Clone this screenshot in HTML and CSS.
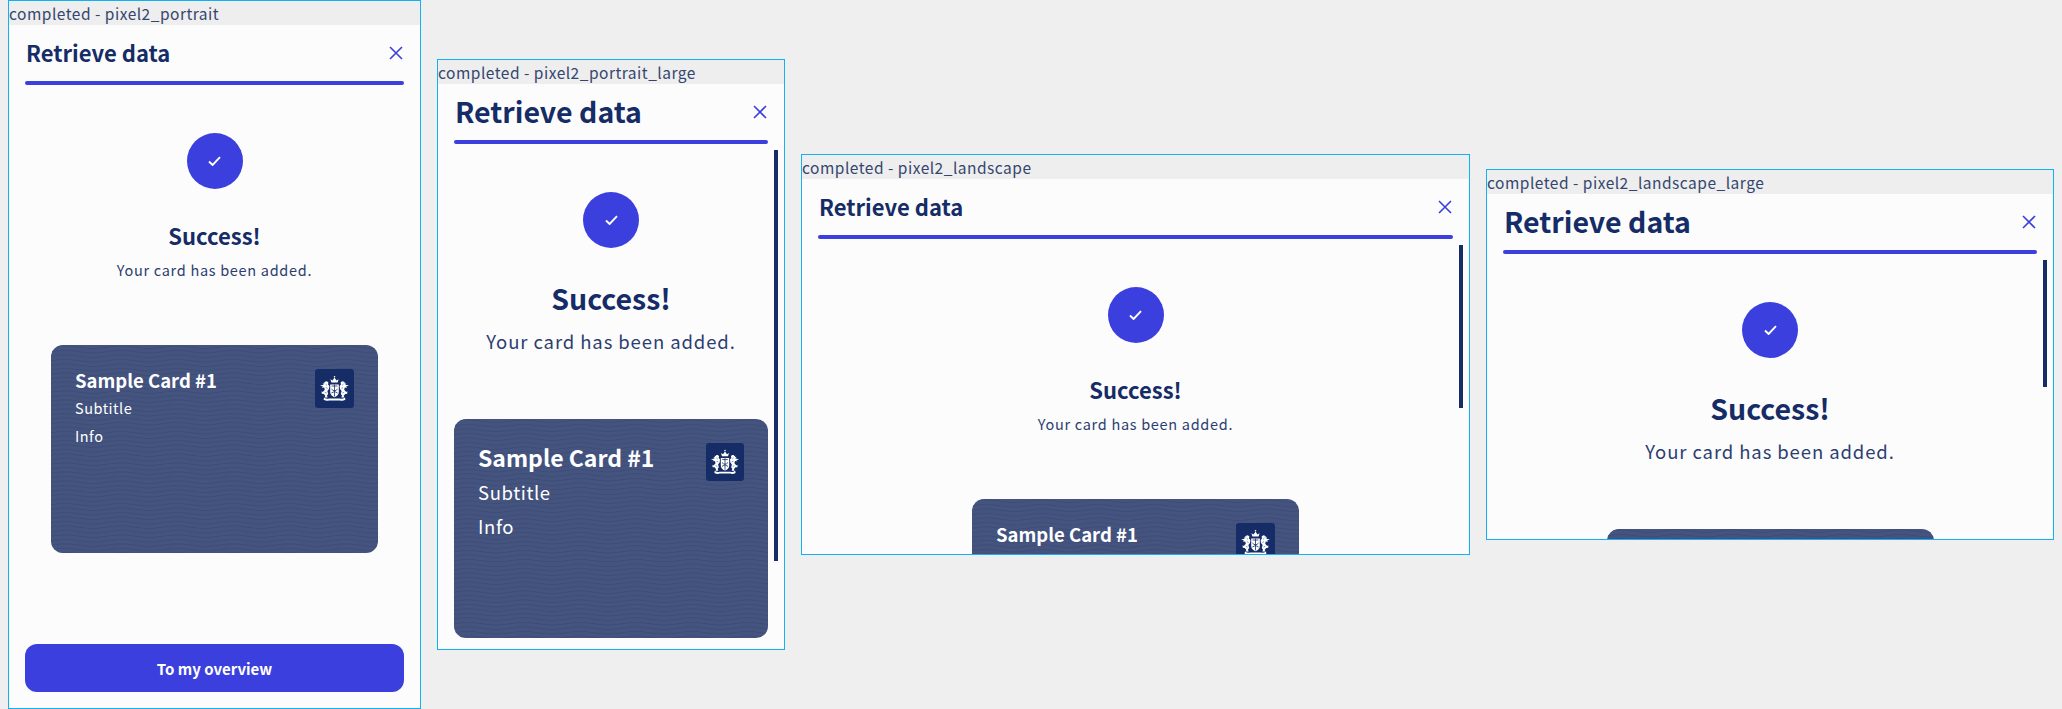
FILE: index.html
```html
<!DOCTYPE html>
<html lang="en">
<head>
<meta charset="utf-8">
<title>Retrieve data</title>
<link rel="stylesheet" href="styles.css">
</head>
<body>
<svg class="defs" width="0" height="0" aria-hidden="true">
  <defs>
    <pattern id="waves" width="56" height="9" patternUnits="userSpaceOnUse">
      <path d="M0 2.2 C14 0.4 14 0.4 28 2.2 S42 4 56 2.2" fill="none" stroke="#3a4a75" stroke-width="0.8"/>
      <path d="M0 6.7 C14 4.9 14 4.9 28 6.7 S42 8.5 56 6.7" fill="none" stroke="#3a4a75" stroke-width="0.8"/>
    </pattern>
    <g id="lion">
      <path d="M14.4 17 L13 15.4 L13.4 13.6 L12.2 12.4 L10.6 12.2 L10 13.4 L8.8 13 L9.4 14.6 L7.6 14.4 L8.8 15.8 L5 16.6 L8 17.6 L6.8 18.8 L9.2 18.6 L9.8 20.8 L7.8 23 L6.6 22.2 L6.8 24.8 L8.8 25 L10.4 27 L9.6 28.6 L12.6 28.6 L12 26.4 L13.2 25 L12.4 22 L14 20 Z" fill="#fff"/>
      <path d="M10.6 15.2 L12 16.4 M10.8 18.6 L12.6 19.4 M9.8 23.4 L11.6 24" stroke="#152c66" stroke-width="0.5" fill="none"/>
    </g>
    <g id="coat">
      <use href="#lion"/>
      <use href="#lion" transform="matrix(-1 0 0 1 39 0)"/>
      <path d="M16.4 13.6 L15.4 10.2 L17.5 11.6 L19.5 8.6 L21.5 11.6 L23.6 10.2 L22.6 13.6 Z" fill="#fff"/>
      <circle cx="19.5" cy="7.8" r="0.8" fill="#fff"/>
      <path d="M15.2 15.4 H23.8 V23 Q23.8 26.6 19.5 28.2 Q15.2 26.6 15.2 23 Z" fill="#fff"/>
      <path d="M16.6 17 H22.4 M19.5 15.6 V27.4 M16.4 20 Q19.5 23.6 22.6 20 M16.4 24 Q19.5 21 22.6 24" stroke="#152c66" stroke-width="0.8" fill="none"/>
      <path d="M9 28.6 Q12 30.6 14 29.4 H25 Q27 30.6 30 28.6 L30.4 30.8 Q27.4 32.4 25 31.4 H14 Q11.6 32.4 8.6 30.8 Z" fill="#fff"/>
    </g>
    <g id="close-x">
      <path d="M1 1 L13 13 M13 1 L1 13" fill="none" stroke="#3a3fdd" stroke-width="1.6"/>
    </g>
    <g id="tick">
      <path d="M1 5.5 L4.6 9 L12 1.2" fill="none" stroke="#fff" stroke-width="1.9"/>
    </g>
  </defs>
</svg>

<section class="frame frame-portrait">
  <div class="frame-label">completed - pixel2_portrait</div>
  <div class="modal">
    <header class="modal-head">
      <h1 class="modal-title">Retrieve data</h1>
      <svg class="close" width="14" height="14" viewBox="0 0 14 14"><use href="#close-x"/></svg>
    </header>
    <div class="modal-rule"></div>
    <div class="modal-body">
      <div class="badge"><svg width="13" height="10" viewBox="0 0 13 10"><use href="#tick"/></svg></div>
      <h2 class="headline">Success!</h2>
      <p class="message">Your card has been added.</p>
      <article class="card">
        <svg class="card-waves" width="100%" height="100%"><rect width="100%" height="100%" fill="url(#waves)"/></svg>
        <div class="card-text">
          <div class="card-title">Sample Card #1</div>
          <div class="card-line">Subtitle</div>
          <div class="card-line">Info</div>
        </div>
        <div class="card-logo"><svg width="100%" height="100%" viewBox="0 0 39 39"><use href="#coat"/></svg></div>
      </article>
      <button class="cta" type="button">To my overview</button>
    </div>
  </div>
</section>

<section class="frame frame-portrait-large is-large">
  <div class="frame-label">completed - pixel2_portrait_large</div>
  <div class="modal">
    <header class="modal-head">
      <h1 class="modal-title">Retrieve data</h1>
      <svg class="close" width="14" height="14" viewBox="0 0 14 14"><use href="#close-x"/></svg>
    </header>
    <div class="modal-rule"></div>
    <div class="modal-body">
      <div class="scroll-thumb"></div>
      <div class="badge"><svg width="13" height="10" viewBox="0 0 13 10"><use href="#tick"/></svg></div>
      <h2 class="headline">Success!</h2>
      <p class="message">Your card has been added.</p>
      <article class="card">
        <svg class="card-waves" width="100%" height="100%"><rect width="100%" height="100%" fill="url(#waves)"/></svg>
        <div class="card-text">
          <div class="card-title">Sample Card #1</div>
          <div class="card-line">Subtitle</div>
          <div class="card-line">Info</div>
        </div>
        <div class="card-logo"><svg width="100%" height="100%" viewBox="0 0 39 39"><use href="#coat"/></svg></div>
      </article>
    </div>
  </div>
</section>

<section class="frame frame-landscape">
  <div class="frame-label">completed - pixel2_landscape</div>
  <div class="modal">
    <header class="modal-head">
      <h1 class="modal-title">Retrieve data</h1>
      <svg class="close" width="14" height="14" viewBox="0 0 14 14"><use href="#close-x"/></svg>
    </header>
    <div class="modal-rule"></div>
    <div class="modal-body">
      <div class="scroll-thumb"></div>
      <div class="badge"><svg width="13" height="10" viewBox="0 0 13 10"><use href="#tick"/></svg></div>
      <h2 class="headline">Success!</h2>
      <p class="message">Your card has been added.</p>
      <article class="card">
        <svg class="card-waves" width="100%" height="100%"><rect width="100%" height="100%" fill="url(#waves)"/></svg>
        <div class="card-text">
          <div class="card-title">Sample Card #1</div>
        </div>
        <div class="card-logo"><svg width="100%" height="100%" viewBox="0 0 39 39"><use href="#coat"/></svg></div>
      </article>
    </div>
  </div>
</section>

<section class="frame frame-landscape-large is-large">
  <div class="frame-label">completed - pixel2_landscape_large</div>
  <div class="modal">
    <header class="modal-head">
      <h1 class="modal-title">Retrieve data</h1>
      <svg class="close" width="14" height="14" viewBox="0 0 14 14"><use href="#close-x"/></svg>
    </header>
    <div class="modal-rule"></div>
    <div class="modal-body">
      <div class="scroll-thumb"></div>
      <div class="badge"><svg width="13" height="10" viewBox="0 0 13 10"><use href="#tick"/></svg></div>
      <h2 class="headline">Success!</h2>
      <p class="message">Your card has been added.</p>
      <article class="card">
        <svg class="card-waves" width="100%" height="100%"><rect width="100%" height="100%" fill="url(#waves)"/></svg>
      </article>
    </div>
  </div>
</section>
</body>
</html>
```
FILE: styles.css
```css
* { box-sizing: border-box; }

html, body { height: 100%; }

body {
  margin: 0;
  padding: 0 8px;
  height: 709px;
  overflow: hidden;
  background: #efefef;
  color: #152c66;
  font-family: "Noto Sans CJK KR", "Noto Sans", sans-serif;
  display: flex;
  align-items: center;
  gap: 16px;
}

.defs { position: absolute; }

.frame {
  flex: none;
  display: flex;
  flex-direction: column;
  border: 1px solid #12b0f5;
  background: #fcfcfd;
  overflow: hidden;
}

.frame-portrait { width: 413px; height: 709px; }
.frame-portrait-large { width: 348px; height: 591px; }
.frame-landscape { width: 669px; height: 401px; }
.frame-landscape-large { width: 568px; height: 371px; }

.frame-label {
  flex: none;
  height: 24px;
  background: #eeeeee;
  font-size: 15.5px;
  line-height: 24px;
  letter-spacing: 0.5px;
  white-space: nowrap;
  color: #34466f;
}

.modal {
  flex: 1;
  min-height: 0;
  display: flex;
  flex-direction: column;
  padding: 0 16px;
}

.modal-head {
  flex: none;
  height: 56px;
  padding-right: 1px;
  display: flex;
  align-items: center;
  justify-content: space-between;
}

.modal-title {
  margin: 0 0 2px 1px;
  font-size: 22px;
  font-weight: 700;
  line-height: 30px;
}

.close { flex: none; display: block; }

.modal-rule {
  flex: none;
  height: 4px;
  border-radius: 2px;
  background: #3a3fdd;
}

.modal-body {
  position: relative;
  flex: 1;
  min-height: 0;
  display: flex;
  flex-direction: column;
  align-items: center;
  padding-top: 48px;
}

.scroll-thumb {
  position: absolute;
  top: 6px;
  right: -10px;
  width: 4px;
  background: #152c66;
}

.frame-portrait-large .scroll-thumb { height: 411px; }
.frame-landscape .scroll-thumb { height: 163px; }
.frame-landscape-large .scroll-thumb { height: 127px; }

.badge {
  flex: none;
  width: 56px;
  height: 56px;
  border-radius: 50%;
  background: #3a3fdd;
  display: flex;
  align-items: center;
  justify-content: center;
}

.headline {
  flex: none;
  margin: 31px 0 0;
  font-size: 22px;
  font-weight: 700;
  line-height: 30px;
}

.message {
  flex: none;
  margin: 10px 0 0;
  font-size: 14.5px;
  line-height: 20px;
  letter-spacing: 0.7px;
  color: #2c3e70;
}

.card {
  flex: none;
  position: relative;
  width: 100%;
  max-width: 327px;
  height: 208px;
  margin-top: 65px;
  padding: 24px;
  border-radius: 12px;
  background: #44547f;
  color: #fff;
  overflow: hidden;
  display: flex;
  justify-content: space-between;
  align-items: flex-start;
}

.card-waves {
  position: absolute;
  top: 0;
  left: 0;
}

.card-text { position: relative; }

.card-title {
  font-size: 18.5px;
  font-weight: 700;
  line-height: 22px;
}

.card-line {
  margin-top: 6px;
  font-size: 14.5px;
  line-height: 22px;
  letter-spacing: 0.5px;
}

.card-logo {
  position: relative;
  flex: none;
  width: 39px;
  height: 39px;
  border-radius: 3px;
  background: #152c66;
}

.cta {
  flex: none;
  width: 100%;
  height: 48px;
  margin-top: auto;
  margin-bottom: 16px;
  border: 0;
  border-radius: 12px;
  background: #3a3fdd;
  color: #fff;
  font-family: inherit;
  font-size: 15px;
  font-weight: 700;
}

/* large text scale */
.is-large .modal-title { font-size: 28.5px; line-height: 38px; }
.is-large .headline { margin-top: 30px; font-size: 28.5px; line-height: 40px; }
.is-large .message { margin-top: 10px; font-size: 18.5px; line-height: 26px; letter-spacing: 0.9px; }
.is-large .card { margin-top: 65px; height: 219px; }
.is-large .card-title { font-size: 23px; line-height: 28px; }
.is-large .card-line { margin-top: 8px; font-size: 18.5px; line-height: 26px; letter-spacing: 0.6px; }
.is-large .card-logo { width: 38px; height: 38px; }
```
